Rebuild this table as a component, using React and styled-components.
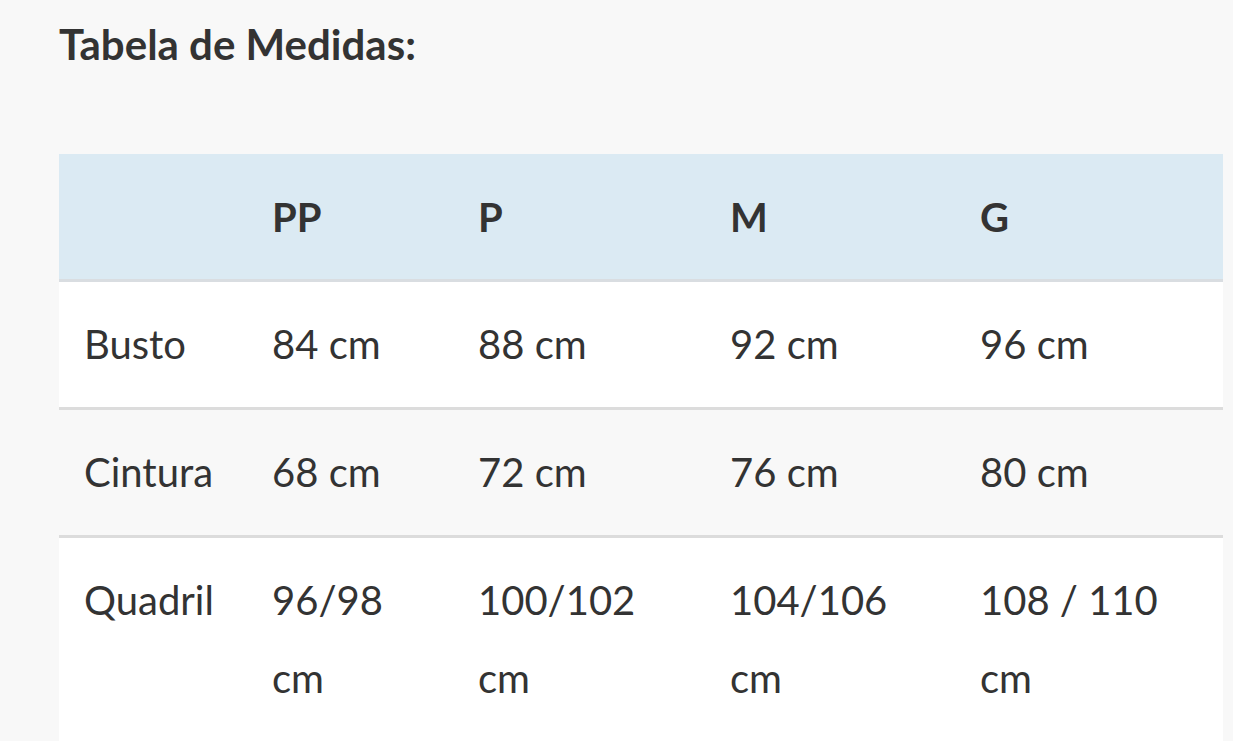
import styled, { createGlobalStyle } from "styled-components";

const GlobalStyle = createGlobalStyle`
    body {
        margin: 0;
        background: #f8f8f8;
        font-family: Lato, "Open Sans", sans-serif;
        color: #333333;
    }
`;

const Page = styled.div`
    padding: 0 10px 0 59px;
    height: 741px;
    overflow: hidden;
`;

const Title = styled.h2`
    margin: 0;
    padding-top: 18px;
    font-size: 42px;
    line-height: 52px;
    font-weight: 700;
    color: #333333;
`;

const Table = styled.table`
    margin-top: 84px;
    width: 1164px;
    border-collapse: collapse;
    table-layout: fixed;
    font-size: 40px;
`;

const HeadRow = styled.tr`
    background: #dbeaf3;
    border-bottom: 3px solid #d9dde1;
`;

const Row = styled.tr`
    background: ${(p) => (p.$striped ? "#f8f8f8" : "#ffffff")};
    border-bottom: 3px solid #dcdcdc;
`;

const HeadCell = styled.th`
    height: 125px;
    padding: 0 0 0 25px;
    text-align: left;
    font-weight: 700;
    vertical-align: middle;
`;

const Cell = styled.td`
    padding: 23px 20px 24px 25px;
    line-height: 78px;
    vertical-align: top;
`;

const widths = [188, 206, 252, 250, 268];
const sizes = ["PP", "P", "M", "G"];
const rows = [
    ["Busto", "84 cm", "88 cm", "92 cm", "96 cm"],
    ["Cintura", "68 cm", "72 cm", "76 cm", "80 cm"],
    ["Quadril", "96/98 cm", "100/102 cm", "104/106 cm", "108 / 110 cm"],
];

const App = () => (
    <>
        <GlobalStyle />
        <Page>
            <Title>Tabela de Medidas:</Title>
            <Table>
                <colgroup>
                    {widths.map((w, i) => (
                        <col key={i} style={{ width: w }} />
                    ))}
                </colgroup>
                <thead>
                    <HeadRow>
                        <HeadCell />
                        {sizes.map((s) => (
                            <HeadCell key={s}>{s}</HeadCell>
                        ))}
                    </HeadRow>
                </thead>
                <tbody>
                    {rows.map((r, i) => (
                        <Row key={r[0]} $striped={i % 2 === 1}>
                            {r.map((c, j) => (
                                <Cell key={j}>{c}</Cell>
                            ))}
                        </Row>
                    ))}
                </tbody>
            </Table>
        </Page>
    </>
);

export default App;
